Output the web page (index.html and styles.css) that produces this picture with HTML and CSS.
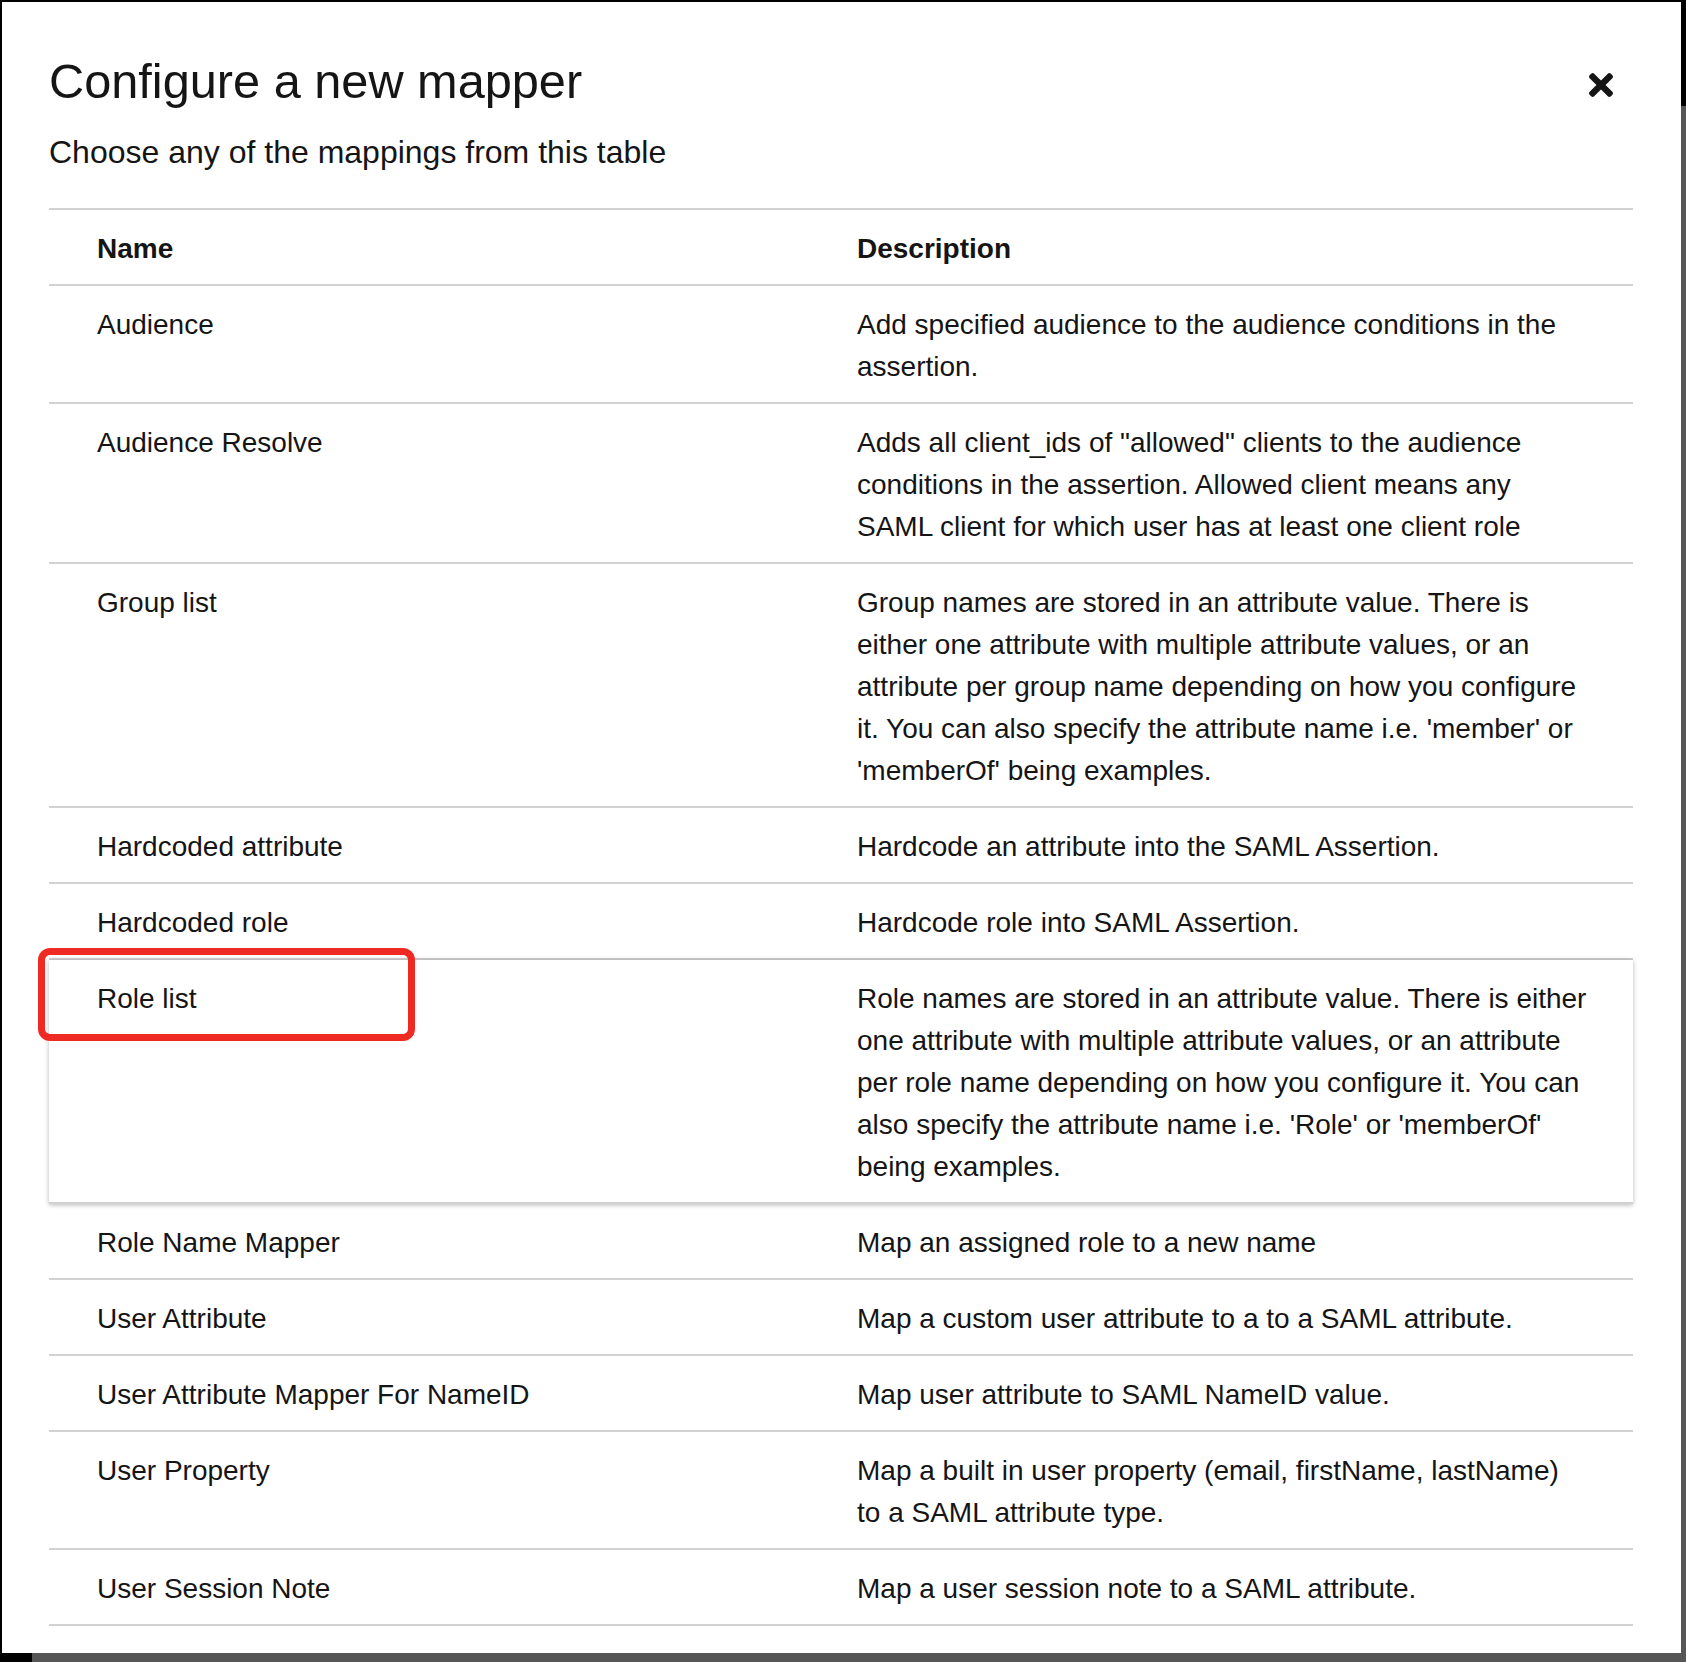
FILE: index.html
```html
<!DOCTYPE html>
<html lang="en">
<head>
<meta charset="utf-8">
<title>Configure a new mapper</title>
<link rel="stylesheet" href="styles.css">
</head>
<body>
<div class="modal">
  <button class="close" aria-label="Close">
    <svg viewBox="0 80 352 352" width="24" height="24" aria-hidden="true"><path d="M242.72 256l100.07-100.07c12.28-12.280 12.28-32.19 0-44.48l-22.24-22.24c-12.28-12.28-32.19-12.28-44.48 0L176 189.28 75.93 89.21c-12.28-12.28-32.19-12.28-44.48 0L9.21 111.45c-12.28 12.28-12.28 32.19 0 44.48L109.28 256 9.21 356.07c-12.28 12.28-12.28 32.19 0 44.48l22.24 22.24c12.28 12.28 32.2 12.28 44.48 0L176 322.72l100.07 100.07c12.28 12.28 32.2 12.28 44.48 0l22.24-22.24c12.28-12.28 12.28-32.19 0-44.48L242.72 256z"/></svg>
  </button>
  <header class="modal-header">
    <h1 class="title">Configure a new mapper</h1>
    <p class="subtitle">Choose any of the mappings from this table</p>
  </header>
  <div class="table">
    <div class="row head">
      <div class="cell">Name</div>
      <div class="cell">Description</div>
    </div>
    <div class="row">
      <div class="cell">Audience</div>
      <div class="cell">Add specified audience to the audience conditions in the<br>assertion.</div>
    </div>
    <div class="row">
      <div class="cell">Audience Resolve</div>
      <div class="cell">Adds all client_ids of "allowed" clients to the audience<br>conditions in the assertion. Allowed client means any<br>SAML client for which user has at least one client role</div>
    </div>
    <div class="row">
      <div class="cell">Group list</div>
      <div class="cell">Group names are stored in an attribute value. There is<br>either one attribute with multiple attribute values, or an<br>attribute per group name depending on how you configure<br>it. You can also specify the attribute name i.e. 'member' or<br>'memberOf' being examples.</div>
    </div>
    <div class="row">
      <div class="cell">Hardcoded attribute</div>
      <div class="cell">Hardcode an attribute into the SAML Assertion.</div>
    </div>
    <div class="row">
      <div class="cell">Hardcoded role</div>
      <div class="cell">Hardcode role into SAML Assertion.</div>
    </div>
    <div class="row hovered">
      <div class="cell">Role list</div>
      <div class="cell">Role names are stored in an attribute value. There is either<br>one attribute with multiple attribute values, or an attribute<br>per role name depending on how you configure it. You can<br>also specify the attribute name i.e. 'Role' or 'memberOf'<br>being examples.</div>
      <span class="highlight" aria-hidden="true"></span>
    </div>
    <div class="row">
      <div class="cell">Role Name Mapper</div>
      <div class="cell">Map an assigned role to a new name</div>
    </div>
    <div class="row">
      <div class="cell">User Attribute</div>
      <div class="cell">Map a custom user attribute to a to a SAML attribute.</div>
    </div>
    <div class="row">
      <div class="cell">User Attribute Mapper For NameID</div>
      <div class="cell">Map user attribute to SAML NameID value.</div>
    </div>
    <div class="row">
      <div class="cell">User Property</div>
      <div class="cell">Map a built in user property (email, firstName, lastName)<br>to a SAML attribute type.</div>
    </div>
    <div class="row">
      <div class="cell">User Session Note</div>
      <div class="cell">Map a user session note to a SAML attribute.</div>
    </div>
  </div>
</div>
</body>
</html>
```

FILE: styles.css
```css
html, body {
  margin: 0;
  padding: 0;
}

body {
  width: 1686px;
  height: 1662px;
  overflow: hidden;
  background:
    linear-gradient(#000, #000) 0 0 / 1686px 106px no-repeat,
    linear-gradient(#000, #000) 0 0 / 32px 100% no-repeat,
    #565656;
  font-family: "Liberation Sans", Arial, sans-serif;
  color: #151515;
}

.modal {
  position: relative;
  margin: 2px 0 0 2px;
  width: 1679px;
  height: 1651px;
  box-sizing: border-box;
  padding: 48px 48px 0 47px;
  background: #fff;
  overflow: hidden;
}

.close {
  position: absolute;
  top: 71px;
  right: 68px;
  padding: 0;
  margin: 0;
  border: 0;
  background: none;
  line-height: 0;
  cursor: pointer;
}

.close svg {
  fill: #151515;
  display: block;
}

.title {
  margin: 0;
  font-size: 48.7px;
  font-weight: 400;
  line-height: 62px;
  color: #151515;
}

.subtitle {
  margin: 16px 0 0;
  font-size: 32px;
  line-height: 48px;
}

.table {
  margin-top: 32px;
  border-top: 2px solid #d2d2d2;
}

.row {
  position: relative;
  display: grid;
  grid-template-columns: 760px 728px;
  padding: 18px 48px 14px;
  border-bottom: 2px solid #d2d2d2;
  font-size: 28px;
  line-height: 42px;
  background: #fff;
}

.cell {
  white-space: nowrap;
}

.head .cell {
  font-weight: 700;
}

.hovered {
  z-index: 1;
  box-shadow: 0 0 5px rgba(3, 3, 3, 0.18), 0 2px 4px rgba(3, 3, 3, 0.12);
}

.highlight {
  position: absolute;
  left: -11px;
  top: -12px;
  width: 377px;
  height: 93px;
  box-sizing: border-box;
  border: 7px solid #ef2a23;
  border-radius: 12px;
}
```
